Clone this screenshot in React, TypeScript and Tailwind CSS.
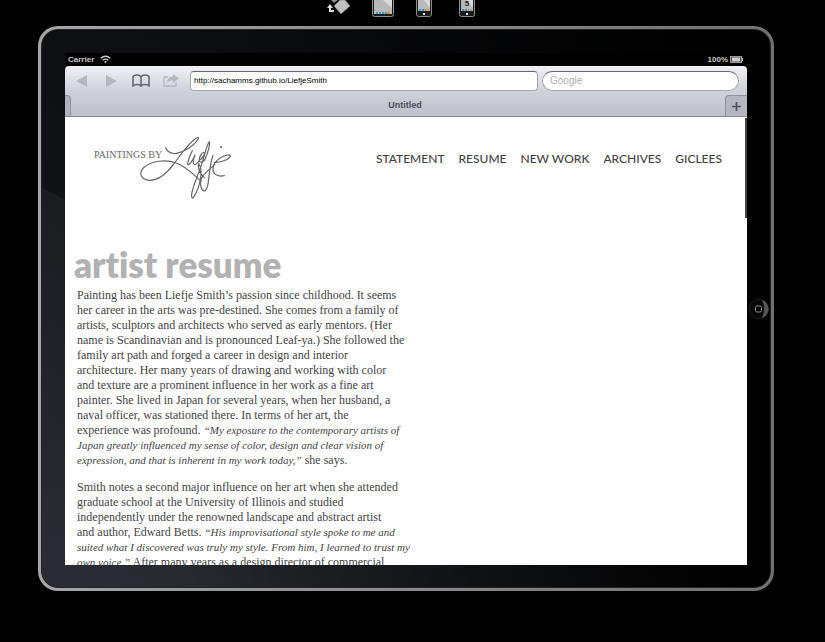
import type { ReactNode } from "react";

const navItems = ["STATEMENT", "RESUME", "NEW WORK", "ARCHIVES", "GICLEES"];

function RotateIcon() {
  return (
    <svg width="25" height="17" viewBox="0 0 25 17" aria-hidden="true">
      <path d="M4 0h7L7 3z" fill="#8c8c8c" />
      <path d="M7 6l6-6h5l5 6-9 8z" fill="#c0c0c0" stroke="#777" strokeWidth="0.700" />
      <path d="M3 6v5h4" fill="none" stroke="#ddd" strokeWidth="2" />
      <path d="M0 8l3-4 3 4z" fill="#ddd" />
    </svg>
  );
}

function DeviceIcon({ wide, digit }: { wide?: boolean; digit?: string }) {
  const w = wide ? 22 : 16;
  return (
    <svg width={w} height="17" viewBox={`0 0 ${w} 17`} aria-hidden="true">
      <rect x="0.5" y="-6" width={w - 1} height="22.5" rx="2" fill="#1b1b1b" stroke="#8d8d8d" />
      <rect x="2" y="-4" width={w - 4} height={wide ? 18 : 15} fill="#b9b9b9" />
      <path d={`M${w - 2} 0v8L${w / 2} 0z`} fill="#dadada" />
      <path d={wide ? "M4 13h11" : "M3 10h7"} stroke="#3598c7" strokeWidth="2" strokeDasharray="2 1" />
      <path d={wide ? "M15 13h3" : "M11 10h2"} stroke="#f39a25" strokeWidth="2" />
      {!wide && <rect x="7" y="13" width="2" height="2" fill="#e5e5e5" />}
      {digit && (
        <text x="8" y="6" textAnchor="middle" fontSize="8" fontWeight="bold" fontFamily="Liberation Sans, sans-serif" fill="#222">
          {digit}
        </text>
      )}
    </svg>
  );
}

function WifiIcon() {
  return (
    <svg width="11" height="9" viewBox="0 0 11 9" fill="none" stroke="#c9c9c9" strokeWidth="1.4" aria-hidden="true">
      <path d="M.7 3.3q4.8-4 9.6 0M2.6 5.2q2.9-2.2 5.8 0" />
      <path d="M4 6.6q1.5-1 3 0L5.500 8.300z" fill="#c9c9c9" stroke="none" />
    </svg>
  );
}

function BatteryIcon() {
  return (
    <svg width="14" height="7" viewBox="0 0 14 7" aria-hidden="true">
      <rect x="0.5" y="0.5" width="11" height="6" fill="#555" stroke="#999" />
      <rect x="2" y="1.500" width="8" height="4" fill="#ccc" />
      <path d="M12 2h1v3h-1z" fill="#aaa" />
    </svg>
  );
}

function BookIcon() {
  return (
    <svg width="18" height="13" viewBox="0 0 18 13" fill="none" stroke="#62666e" strokeWidth="1.5" aria-hidden="true">
      <path d="M9 3Q8 1 5 1 2 1 1 2.500V12Q2.500 10.500 5 10.500 8 10.500 9 12q1-1.500 4-1.500 2.500 0 4 1.500V2.500Q16 1 13 1 10 1 9 3v9" />
    </svg>
  );
}

function ShareIcon() {
  return (
    <svg width="16" height="13" viewBox="0 0 16 13" aria-hidden="true">
      <path d="M5 3H1v9h12V8.500" fill="none" stroke="#b5b8bf" strokeWidth="1.3" />
      <path d="M10 0l6 4.500-6 4.500V6.500Q6 6 4 9q0-6 6-6.500z" fill="#b5b8bf" />
    </svg>
  );
}

function Signature() {
  return (
    <svg className="-ml-[22px]" width="92" height="65" viewBox="180 30 276 195" fill="none" stroke="#666" strokeWidth="3.600" strokeLinecap="round" strokeLinejoin="round" aria-label="Liefje" role="img">
      <path d="M257 68c6 13 18 19 32 17 28-6 55-25 66-43 2-5-2-6-7-2-27 19-46 50-68 79-19 25-42 48-72 47-25-1-33-23-18-37 22-22 66-27 99-15 27 9 48 32 74 54" />
      <path d="M337 77c-6 12-14 32-14 41 3 6 15-10 22-28-5 12-7 24-3 28 5 2 13-6 18-14 9-5 16-18 12-21-6-3-15 13-14 24 2 8 10 5 16-2 8-18 16-44 14-55-7 5-14 40-23 68-11 32-24 60-29 84-4 14 1 20 4 16 10-14 20-44 23-68 1-16-4-30-7-34-4 12 4 30 17 42" />
      <path d="M399 91c-8 22-10 45-13 72-2 20-7 36-14 35-9-3-13-20-9-35 6-16 26-30 41-45" />
      <path d="M403 112c16 1 44-7 48-19-3-10-40 5-50 28-8 24 8 36 32 31" />
      <circle cx="423" cy="66" r="1.500" />
    </svg>
  );
}

function ToolButton({ label, children }: { label: string; children: ReactNode }) {
  return (
    <button type="button" aria-label={label} className="flex h-5 w-[30px] items-center justify-center">
      {children}
    </button>
  );
}

function BrowserChrome() {
  return (
    <div className="rounded-t bg-linear-to-b from-[#f0f1f4] via-[#cfd1da] to-[#bcbecb] font-['Liberation_Sans',Arial,sans-serif]">
      <div className="flex h-[29px] items-center pr-2">
        <div className="flex w-[125px] shrink-0 items-center pl-px">
          <ToolButton label="Back">
            <svg width="11" height="12" viewBox="0 0 11 12"><path d="M0 6l11-6v12z" fill="#b5b8bf" /></svg>
          </ToolButton>
          <ToolButton label="Forward">
            <svg width="11" height="12" viewBox="0 0 11 12"><path d="M11 6L0 0v12z" fill="#b5b8bf" /></svg>
          </ToolButton>
          <ToolButton label="Bookmarks"><BookIcon /></ToolButton>
          <ToolButton label="Share"><ShareIcon /></ToolButton>
        </div>
        <div className="flex min-w-0 flex-1 gap-1">
          <input
            aria-label="Address"
            defaultValue="http://sachamms.github.io/LiefjeSmith"
            className="h-5 min-w-0 flex-1 rounded border border-[#a6a8b0] border-t-[#666870] bg-white px-[3px] text-[8px] text-black outline-none"
          />
          <input
            aria-label="Search"
            placeholder="Google"
            className="h-5 w-[197px] rounded-full border border-[#a6a8b0] border-t-[#666870] bg-white px-[7px] text-[10px] outline-none placeholder:text-[#b0b0b0]"
          />
        </div>
      </div>
      <div className="flex h-[22px] border-b border-[#8a8b93]">
        <div className="w-[6px] rounded-tr border-t border-r border-[#8f919b] bg-[#b0b2bf]" />
        <div className="flex flex-1 items-center justify-center pl-[14px] text-[9px] font-bold text-[#4c4e56]">Untitled</div>
        <button type="button" aria-label="New tab" className="flex w-[22px] items-center justify-center rounded-tl border-t border-l border-[#8f919b] bg-[#b4b6c2]">
          <svg width="9" height="9" viewBox="0 0 9 9"><path d="M4.500 0v9M0 4.500h9" stroke="#4c535d" strokeWidth="1.700" /></svg>
        </button>
      </div>
    </div>
  );
}

function WebPage() {
  return (
    <div className="relative h-[448px] overflow-hidden bg-white">
      <header className="flex items-start justify-between pt-[18px] pr-[25px] pl-[29px]">
        <div className="flex items-start">
          <span className="mt-[13px] font-['Liberation_Serif',serif] text-[10px] leading-[14px] whitespace-nowrap text-[#666]">PAINTINGS BY</span>
          <Signature />
        </div>
        <nav className="mt-4 flex gap-[14px] font-['Lato',sans-serif] text-[12px] leading-4 font-medium text-[#444]">
          {navItems.map((item) => (
            <a key={item} href="#" className="whitespace-nowrap">{item}</a>
          ))}
        </nav>
      </header>
      <main className="pt-[42px]">
        <h1 className="pb-[2px] pl-[9px] font-['Lato',sans-serif] text-[35px] leading-[44px] font-extrabold text-[#b2b2b2] [font-variant-ligatures:none]">artist resume</h1>
        <div className="flex flex-col gap-3 pl-3 font-['Liberation_Serif',serif] text-[12px] leading-[15px] whitespace-nowrap text-[#444] [&_em]:text-[11px]">
          <p>
            Painting has been Liefje Smith’s passion since childhood. It seems<br />
            her career in the arts was pre-destined. She comes from a family of<br />
            artists, sculptors and architects who served as early mentors. (Her<br />
            name is Scandinavian and is pronounced Leaf-ya.) She followed the<br />
            family art path and forged a career in design and interior<br />
            architecture. Her many years of drawing and working with color<br />
            and texture are a prominent influence in her work as a fine art<br />
            painter. She lived in Japan for several years, when her husband, a<br />
            naval officer, was stationed there. In terms of her art, the<br />
            experience was profound. <em>“My exposure to the contemporary artists of<br />
            Japan greatly influenced my sense of color, design and clear vision of<br />
            expression, and that is inherent in my work today,”</em> she says.
          </p>
          <p>
            Smith notes a second major influence on her art when she attended<br />
            graduate school at the University of Illinois and studied<br />
            independently under the renowned landscape and abstract artist<br />
            and author, Edward Betts. <em>“His improvisational style spoke to me and<br />
            suited what I discovered was truly my style. From him, I learned to trust my<br />
            own voice.”</em> After many years as a design director of commercial
          </p>
        </div>
      </main>
      <div className="absolute top-px right-0 h-[100px] w-[2px] bg-[#444]" />
    </div>
  );
}

export default function App() {
  return (
    <div className="min-h-screen bg-black pb-[50px]">
      <div className="flex h-[26px] items-start pl-[327px]">
        <button type="button" aria-label="Rotate" className="w-[45px]"><RotateIcon /></button>
        <button type="button" aria-label="Tablet" className="w-[44px]"><DeviceIcon wide /></button>
        <button type="button" aria-label="Phone" className="w-[43px]"><DeviceIcon /></button>
        <button type="button" aria-label="Phone 5"><DeviceIcon digit="5" /></button>
      </div>
      <div className="mr-[51px] ml-[38px] rounded-[20px] bg-linear-to-r from-[#a6a6a6] to-[#707070] p-[3px]">
        <div className="rounded-[17px] border border-[#222] bg-[linear-gradient(90deg,transparent_20%,#000_97%),linear-gradient(27deg,#2a2d33_0%,#1a1c20_43%,#101216_43%,#08090b_100%)] pt-[23px] pb-[22px]">
          <div className="grid grid-cols-[23px_minmax(0,1fr)_23px] items-center">
            <div />
            <div className="bg-black">
              <div className="flex h-[13px] items-center justify-between px-[3px] font-['Liberation_Sans',Arial,sans-serif] text-[8px] font-bold text-[#c9c9c9]">
                <div className="flex items-center gap-[6px]"><span>Carrier</span><WifiIcon /></div>
                <div className="flex items-center gap-[2px]"><span>100%</span><BatteryIcon /></div>
              </div>
              <BrowserChrome />
              <WebPage />
            </div>
            <button type="button" aria-label="Home" className="justify-self-center">
              <svg width="20" height="20" viewBox="0 0 20 20">
                <circle cx="10" cy="10" r="9.500" fill="#050505" stroke="#222" />
                <path d="M13 1q6 2 6.500 9-.5 7-6.500 9 4-9 0-18z" fill="#555" />
                <rect x="6.500" y="7" width="6" height="6" rx="1.500" fill="#050505" stroke="#888" />
              </svg>
            </button>
          </div>
        </div>
      </div>
    </div>
  );
}
